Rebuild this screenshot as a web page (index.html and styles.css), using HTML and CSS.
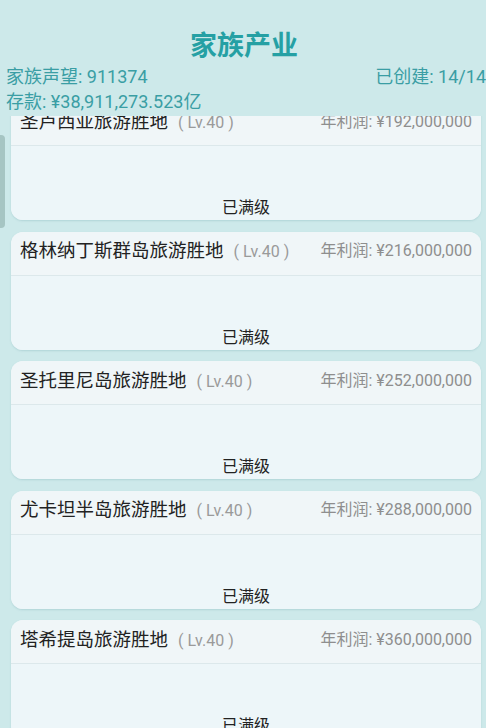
FILE: index.html
```html
<!DOCTYPE html>
<html lang="zh-CN">
<head>
    <meta charset="UTF-8">
    <meta name="viewport" content="width=device-width, initial-scale=1.0">
    <title>家族产业</title>
    <link rel="stylesheet" href="styles.css">
</head>
<body>
    <div class="page">
        <header class="top">
            <h1 class="title">家族产业</h1>
            <div class="info-row">
                <span>家族声望: 911374</span>
                <span>已创建: 14/14</span>
            </div>
            <div class="info-row">
                <span>存款: ¥38,911,273.523亿</span>
            </div>
        </header>

        <div class="side-tab"></div> <!-- pull tab on the left edge -->

        <div class="list">
            <div class="card">
                <div class="card-head">
                    <div class="name">圣卢西亚旅游胜地<span class="lv">( Lv.40 )</span></div>
                    <div class="profit">年利润: ¥192,000,000</div>
                </div>
                <div class="card-body">已满级</div>
            </div>
            <div class="card">
                <div class="card-head">
                    <div class="name">格林纳丁斯群岛旅游胜地<span class="lv">( Lv.40 )</span></div>
                    <div class="profit">年利润: ¥216,000,000</div>
                </div>
                <div class="card-body">已满级</div>
            </div>
            <div class="card">
                <div class="card-head">
                    <div class="name">圣托里尼岛旅游胜地<span class="lv">( Lv.40 )</span></div>
                    <div class="profit">年利润: ¥252,000,000</div>
                </div>
                <div class="card-body">已满级</div>
            </div>
            <div class="card">
                <div class="card-head">
                    <div class="name">尤卡坦半岛旅游胜地<span class="lv">( Lv.40 )</span></div>
                    <div class="profit">年利润: ¥288,000,000</div>
                </div>
                <div class="card-body">已满级</div>
            </div>
            <div class="card">
                <div class="card-head">
                    <div class="name">塔希提岛旅游胜地<span class="lv">( Lv.40 )</span></div>
                    <div class="profit">年利润: ¥360,000,000</div>
                </div>
                <div class="card-body">已满级</div>
            </div>
        </div>
    </div>
</body>
</html>
```

FILE: styles.css
```css
/* General */
* {
    margin: 0;
    padding: 0;
    box-sizing: border-box;
}

body {
    font-family: Roboto, "Noto Sans CJK SC", sans-serif;
    background-color: #cde9ea;
    color: #222;
}

.page {
    position: relative;
    height: 728px;
    display: flex;
    flex-direction: column;
    overflow: hidden;
}

/* Header */
.top {
    padding: 28px 0 2px 6px;
    color: #3a9ea4;
}

.title {
    text-align: center;
    font-size: 27px;
    line-height: 36px;
    font-weight: bold;
    color: #25a0a4;
    padding-right: 4px;
}

.info-row {
    display: flex;
    justify-content: space-between;
    font-size: 18px;
    line-height: 25px;
}

/* Left pull tab */
.side-tab {
    position: absolute;
    left: 0;
    top: 135px;
    width: 5px;
    height: 93px;
    background-color: #a6c5c3;
    border-radius: 0 4px 4px 0;
}

/* Card list */
.list {
    flex: 1;
    overflow: hidden;
    padding: 0 5px 0 11px;
}

.card {
    height: 118px;
    margin-bottom: 11.5px;
    background-color: #eef6f8;
    border-radius: 12px;
    box-shadow: 0 1px 2px rgba(90, 150, 160, 0.25);
    display: flex;
    flex-direction: column;
}

.card:first-child {
    margin-top: -14px; /* list is scrolled a little */
    border-radius: 0 0 12px 12px;
}

.card-head {
    height: 44px;
    padding: 0 9px 8px 9px;
    display: flex;
    align-items: center;
    justify-content: space-between;
    border-bottom: 1px solid #dce8eb;
    background-color: #f0f6f8;
    border-radius: 12px 12px 0 0;
}

.name {
    font-size: 18.5px;
    color: #222;
    white-space: nowrap;
}

.lv {
    font-size: 16px;
    color: #9a9a9a;
    margin-left: 10px;
}

.profit {
    font-size: 16px;
    color: #8e8e8e;
    white-space: nowrap;
}

.card-body {
    flex: 1;
    display: flex;
    align-items: flex-end;
    justify-content: center;
    padding-bottom: 2px;
    font-size: 16px;
    line-height: 20px;
    color: #222;
    background-color: #edf6f9;
    border-radius: 0 0 12px 12px;
}
```
